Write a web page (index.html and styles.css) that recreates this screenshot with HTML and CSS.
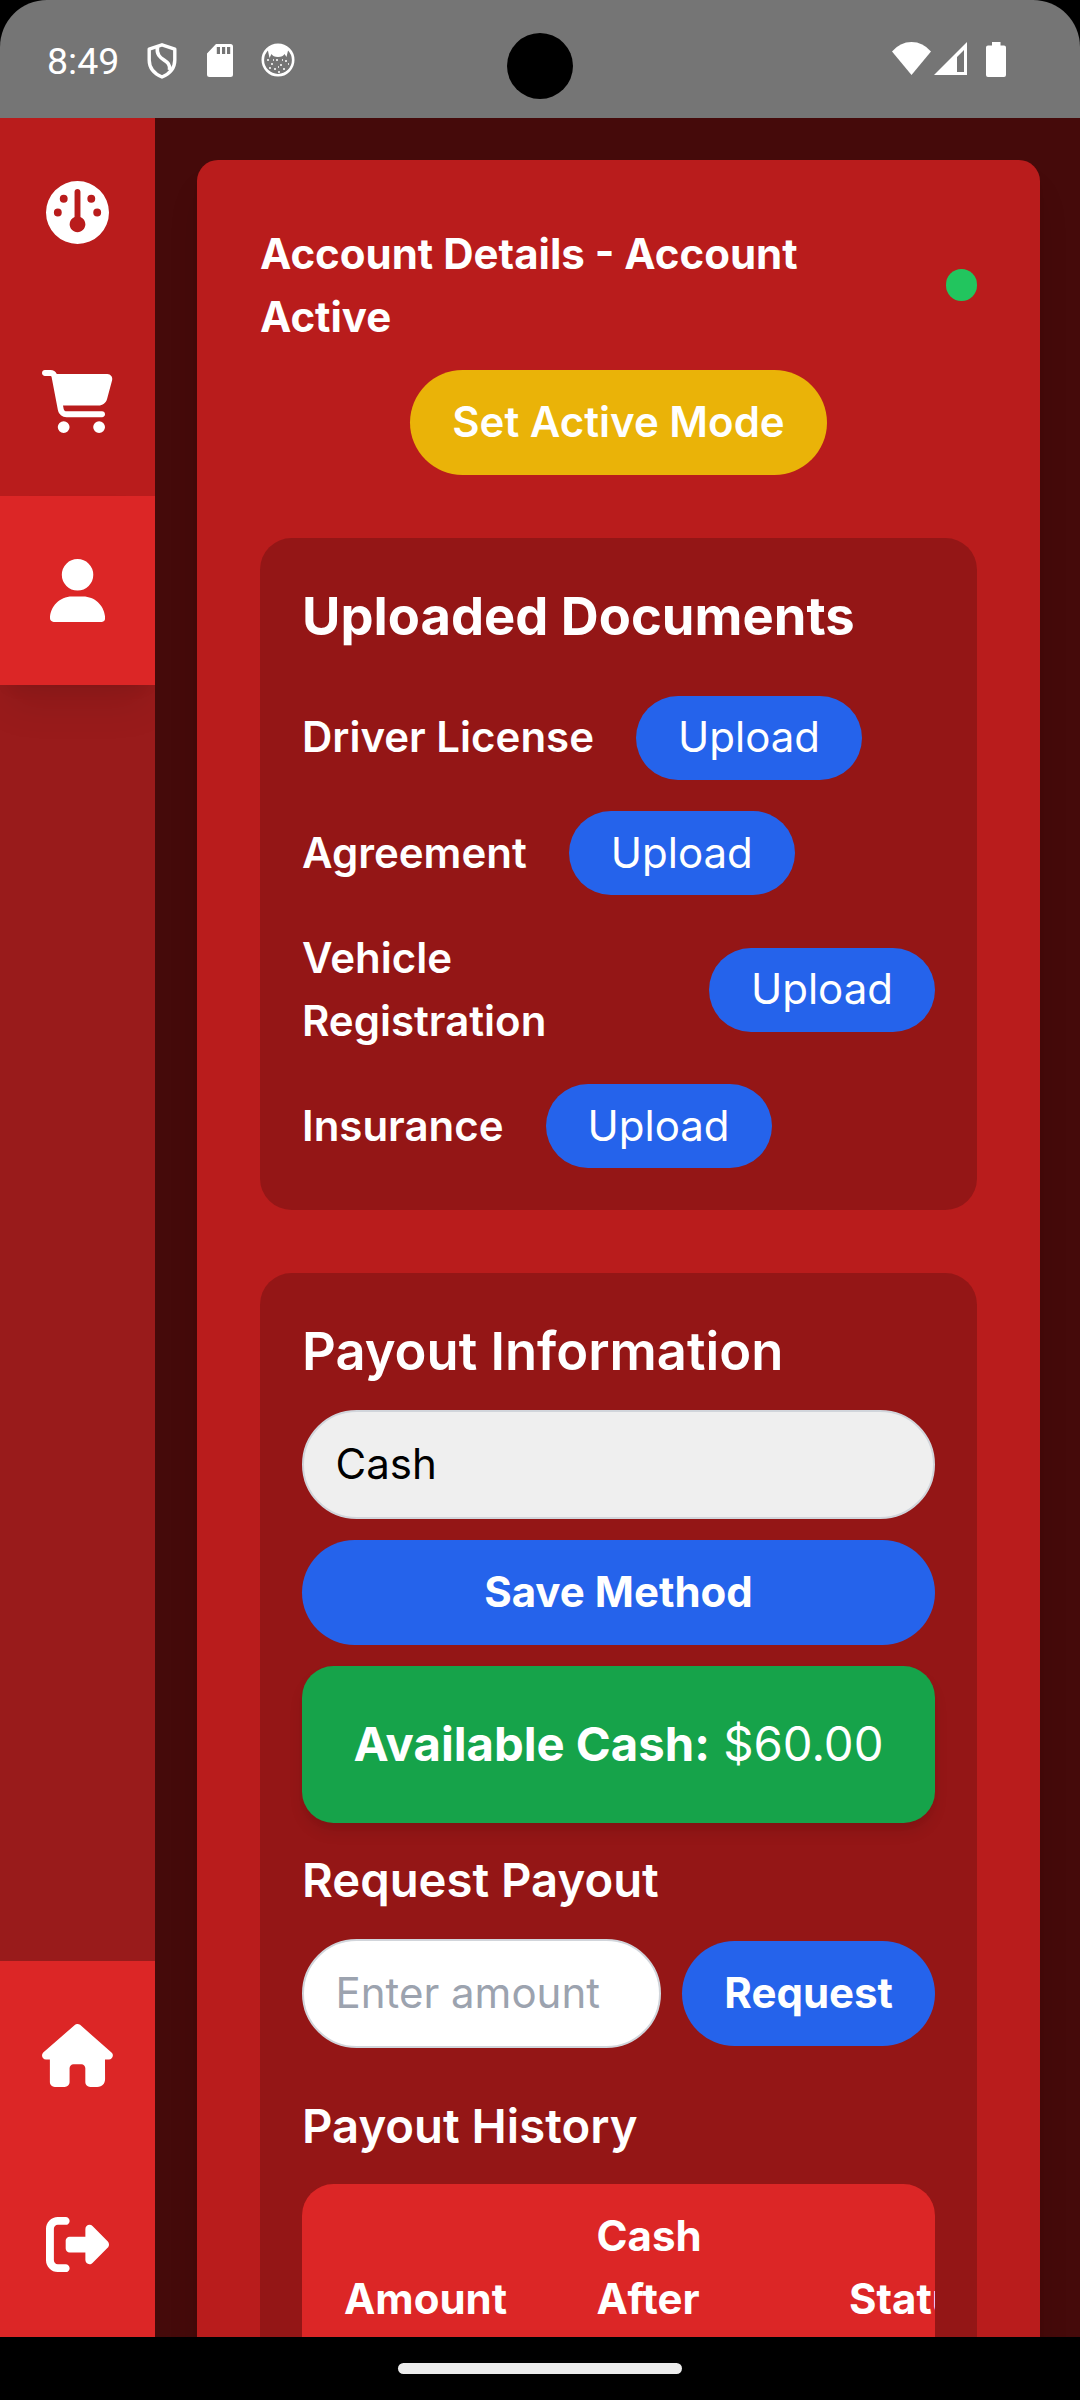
FILE: index.html
```html
<!DOCTYPE html>
<html lang="en">
<head>
<meta charset="utf-8">
<title>Account Details</title>
<link rel="stylesheet" href="styles.css">
</head>
<body>
<div class="device">
  <header class="status">
    <div class="status-bar">
      <div class="status-left">
        <span class="clock">8:49</span>
        <svg class="s-shield" width="30" height="36" viewBox="0 0 30 36"><path d="M15 1.800 27.800 6.200V17c0 8-5.200 13.800-12.800 17C7.400 30.800 2.200 25 2.200 17V6.200Z" fill="none" stroke="#fff" stroke-width="3.400" stroke-linejoin="round"/><path d="M10.500 3.500C8 19 24.500 15 22.500 27" fill="none" stroke="#fff" stroke-width="3.600"/></svg>
        <svg class="s-card" width="26" height="33" viewBox="0 0 26 33"><path fill="#fff" fill-rule="evenodd" d="M9 0h14.500A2.500 2.500 0 0 1 26 2.500v28a2.500 2.500 0 0 1-2.500 2.500h-21A2.500 2.500 0 0 1 0 30.500V9.500ZM9.800 3v7H13V3ZM15 3v7h3.200V3ZM20 3v7h3.200V3Z"/></svg>
        <svg class="s-face" width="34" height="34" viewBox="0 0 34 34"><circle cx="17" cy="17" r="15.200" fill="none" stroke="#fff" stroke-width="2.600"/><path fill="#fff" d="M6.500 5.500Q17-1 27.500 5.500L25.500 14l-2-3q-1.500 3-6.500 3t-6.500-3l-2 4Z"/><path d="M6 17h2M10 21h2M15 17h2M19 22h2M24 18h2M8 25h2M13 26h2M22 26h2M17 29h2M27 21h1M17 24h1M12 17h1M21 17h1" stroke="#fff" stroke-width="1.500"/></svg>
      </div>
      <div class="camera"></div>
      <div class="status-right">
        <svg width="39" height="34" viewBox="0 0 39 34"><path fill="#fff" d="M19.500 33 0 9.500Q8 0 19.500 0T39 9.500Z"/></svg>
        <svg class="s-signal" width="33" height="33" viewBox="0 0 33 33"><path fill="#fff" fill-rule="evenodd" d="M33 0v33H0ZM30 8 23 15v15h7Z"/></svg>
        <svg class="s-battery" width="20" height="35" viewBox="0 0 20 35"><path fill="#fff" d="M6 0h8.500v3.500H18a2 2 0 0 1 2 2V33a2 2 0 0 1-2 2H2a2 2 0 0 1-2-2V5.500a2 2 0 0 1 2-2h4Z"/></svg>
      </div>
    </div>
  </header>

  <div class="app">
    <nav class="sidebar">
      <a class="nav-item"><svg viewBox="0 0 512 512" width="63" height="63"><path fill="#fff" d="M0 256a256 256 0 1 1 512 0A256 256 0 1 1 0 256zm320 96c0-26.900-16.500-49.900-40-59.300V88c0-13.300-10.700-24-24-24s-24 10.700-24 24v204.700c-23.500 9.500-40 32.500-40 59.300c0 35.300 28.700 64 64 64s64-28.700 64-64zM144 176a32 32 0 1 0 0-64 32 32 0 1 0 0 64zm-16 80a32 32 0 1 0-64 0 32 32 0 1 0 64 0zm288 32a32 32 0 1 0 0-64 32 32 0 1 0 0 64zM400 144a32 32 0 1 0-64 0 32 32 0 1 0 64 0z"/></svg></a>
      <a class="nav-item"><svg viewBox="0 0 576 512" width="70.900" height="63"><path fill="#fff" d="M0 24C0 10.700 10.700 0 24 0H69.500c22 0 41.500 12.800 50.600 32h411c26.300 0 45.500 25 38.600 50.400l-41 152.300c-8.500 31.400-37 53.300-69.500 53.300H170.700l5.400 28.500c2.200 11.300 12.100 19.500 23.600 19.500H488c13.300 0 24 10.700 24 24s-10.700 24-24 24H199.700c-34.600 0-64.300-24.600-70.700-58.500L77.400 54.500c-.7-3.800-4-6.500-7.900-6.500H24C10.700 48 0 37.300 0 24zM128 464a48 48 0 1 1 96 0 48 48 0 1 1-96 0zm336-48a48 48 0 1 1 0 96 48 48 0 1 1 0-96z"/></svg></a>
      <a class="nav-item active"><svg viewBox="0 0 448 512" width="55.100" height="63"><path fill="#fff" d="M224 256A128 128 0 1 0 224 0a128 128 0 1 0 0 256zm-45.700 48C79.800 304 0 383.800 0 482.300C0 498.700 13.300 512 29.700 512H418.300c16.400 0 29.700-13.300 29.700-29.700C448 383.800 368.200 304 269.700 304H178.300z"/></svg></a>
      <div class="nav-spacer"></div>
      <a class="nav-item bright"><svg viewBox="0 0 576 512" width="70.900" height="63"><path fill="#fff" d="M575.800 255.500c0 18-15 32.100-32 32.100h-32l.7 160.200c0 35.300-20.700 64.200-64.500 64.200H392c-22.100 0-40-17.900-40-40V360c0-17.700-14.300-32-32-32H256c-17.700 0-32 14.300-32 32V472c0 22.100-17.900 40-40 40H104c-22.100 0-40-17.900-40-40V287.600H32c-18 0-32-14-32-32.100c0-9 3-17 10-24L266.400 8c7-7 15-8 22-8s15 2 21 7L564.800 231.500c8 7 12 15 11 24z"/></svg></a>
      <a class="nav-item bright"><svg viewBox="0 0 512 512" width="63" height="63"><path fill="#fff" d="M377.900 105.900L500.700 228.700c7.200 7.200 11.300 17.100 11.300 27.300s-4.100 20.100-11.300 27.300L377.900 406.100c-6.400 6.400-15 9.900-24 9.900c-18.700 0-33.900-15.200-33.900-33.900V320H192c-17.700 0-32-14.300-32-32V224c0-17.700 14.300-32 32-32H320V129.900c0-18.700 15.200-33.900 33.900-33.900c9 0 17.600 3.600 24 9.900zM160 96H96c-17.700 0-32 14.300-32 32V384c0 17.700 14.300 32 32 32h64c17.700 0 32 14.300 32 32s-14.300 32-32 32H96c-53 0-96-43-96-96V128C0 75 43 32 96 32h64c17.700 0 32 14.300 32 32s-14.300 32-32 32z"/></svg></a>
    </nav>

    <main class="content">
      <div class="card">
        <div class="account-head">
          <h1 class="account-title">Account Details - Account Active</h1>
          <span class="dot"></span>
        </div>
        <button class="pill mode-btn">Set Active Mode</button>

        <section class="panel documents">
          <h2 class="panel-title bold">Uploaded Documents</h2>
          <div class="doc-list">
            <div class="doc-row"><span class="doc-label">Driver License</span><button class="pill upload">Upload</button></div>
            <div class="doc-row"><span class="doc-label">Agreement</span><button class="pill upload">Upload</button></div>
            <div class="doc-row"><span class="doc-label grow">Vehicle Registration</span><button class="pill upload">Upload</button></div>
            <div class="doc-row"><span class="doc-label">Insurance</span><button class="pill upload">Upload</button></div>
          </div>
        </section>

        <section class="panel payout">
          <h2 class="panel-title">Payout Information</h2>
          <div class="field method">Cash</div>
          <button class="pill action">Save Method</button>
          <div class="balance"><strong>Available Cash:</strong> $60.00</div>
          <h3 class="sub-title">Request Payout</h3>
          <div class="request-row">
            <input class="field amount" type="text" placeholder="Enter amount">
            <button class="pill action">Request</button>
          </div>
          <h3 class="sub-title">Payout History</h3>
          <div class="history">
            <div class="history-head">
              <span>Amount</span>
              <span>Cash<br>After</span>
              <span>Status</span>
            </div>
          </div>
        </section>
      </div>
    </main>
  </div>

  <footer class="gesture-bar"><div class="handle"></div></footer>
</div>
</body>
</html>
```

FILE: styles.css
```css
* { box-sizing: border-box; margin: 0; }

body {
  background: #000;
  color: #fff;
  font-family: Inter, "Liberation Sans", sans-serif;
  font-size: 42px;
  line-height: 63px;
}

button, input {
  font: inherit;
  color: inherit;
  border: 0;
}

.device {
  width: 1080px;
  height: 2400px;
  display: flex;
  flex-direction: column;
  overflow: hidden;
}

/* Status bar */
.status { height: 118px; flex: none; background: #000; }

.status-bar {
  height: 118px;
  display: grid;
  grid-template-columns: 1fr 66px 1fr;
  background: #757575;
  border-radius: 47px 47px 0 0;
}

.status-left { display: flex; padding: 43px 0 0 47px; }
.status-right { display: flex; justify-content: flex-end; padding: 42px 74px 0 0; }
.status svg { display: block; flex: none; }

.clock {
  width: 100px;
  font-family: Roboto, sans-serif;
  font-size: 37.500px;
  line-height: 37px;
}

.s-card { margin: 1px 0 0 30px; }
.s-face { margin: 0 0 0 28px; }
.s-signal { margin-left: 3px; }
.s-battery { margin-left: 19px; }

.camera {
  width: 66px;
  height: 66px;
  margin-top: 33px;
  border-radius: 50%;
  background: #000;
}

/* App body */
.app {
  height: 2219px;
  flex: none;
  display: flex;
  background: #450a0a;
  overflow: hidden;
}

.sidebar {
  width: 155px;
  flex: none;
  display: flex;
  flex-direction: column;
  background: #991b1b;
  overflow: hidden;
}

.nav-item {
  height: 189px;
  flex: none;
  display: flex;
  align-items: center;
  justify-content: center;
  background: #b91c1c;
}

.nav-item.active {
  background: #dc2626;
  box-shadow: 0 26px 39px -8px rgba(0, 0, 0, .1), 0 10px 16px -10px rgba(0, 0, 0, .1);
}

.nav-item.bright { background: #dc2626; }
.nav-spacer { flex: none; height: 1276px; }

.content { flex: 1; min-width: 0; padding: 42px 40px 0 42px; }

.card {
  height: 2400px;
  padding: 62px 63px 63px;
  background: #b91c1c;
  border-radius: 21px;
  box-shadow: 0 26px 39px -8px rgba(0, 0, 0, .1), 0 10px 16px -10px rgba(0, 0, 0, .1);
}

.account-head {
  display: flex;
  align-items: center;
  justify-content: space-between;
}

.account-title {
  width: 600px;
  font-size: 42px;
  line-height: 63px;
  font-weight: 700;
}

.dot {
  width: 31.500px;
  height: 31.500px;
  border-radius: 50%;
  background: #22c55e;
}

.pill {
  display: block;
  padding: 20px 42px 22px;
  border-radius: 60px;
  background: #2563eb;
  white-space: nowrap;
}

.mode-btn {
  margin: 22px auto 0;
  background: #eab308;
  font-weight: 600;
}

.panel {
  margin-top: 63px;
  padding: 42px;
  background: rgba(0, 0, 0, .2);
  border-radius: 31.500px;
}

.panel-title {
  font-size: 52.500px;
  line-height: 73.500px;
  font-weight: 600;
}

.panel-title.bold { font-weight: 700; }

.doc-list {
  margin-top: 42px;
  display: flex;
  flex-direction: column;
  gap: 31.500px;
}

.doc-row { display: flex; align-items: center; gap: 42px; }
.doc-label { margin: -1px 0 1px; font-weight: 600; }
.doc-label.grow { flex: 1; }
.upload { padding: 9.500px 42px 11.500px; }

.payout {
  display: flex;
  flex-direction: column;
  gap: 21px;
}

.field {
  height: 109px;
  padding: 20px 31.500px 22px;
  border: 2px solid #d1d5db;
  border-radius: 60px;
}

.method { background: #efefef; color: #000; }
.action { font-weight: 700; }

.balance {
  padding: 41px 42px 43px;
  background: #16a34a;
  border-radius: 31.500px;
  box-shadow: 0 10px 16px -2px rgba(0, 0, 0, .1), 0 5px 10px -5px rgba(0, 0, 0, .1);
  font-size: 47.250px;
  line-height: 73.500px;
  text-align: center;
}

.sub-title {
  margin: -1px 0 1px;
  font-size: 47.250px;
  line-height: 73.500px;
  font-weight: 600;
}

.request-row {
  display: flex;
  align-items: center;
  gap: 21px;
  margin-bottom: 21px;
}

.amount { flex: 1; min-width: 0; background: #fff; }
.amount::placeholder { color: #9ca3af; opacity: 1; }

.history {
  height: 400px;
  background: #dc2626;
  border-radius: 31.500px;
  overflow: hidden;
}

.history-head {
  width: 800px;
  display: grid;
  grid-template-columns: 252.500px 252.500px 1fr;
  align-items: end;
  padding: 20px 0 0 42px;
  font-weight: 700;
}

/* System gesture area */
.gesture-bar {
  flex: 1;
  display: flex;
  justify-content: center;
  padding-top: 26px;
  background: #000;
}

.handle {
  width: 284px;
  height: 11px;
  border-radius: 6px;
  background: #ececec;
}
```
